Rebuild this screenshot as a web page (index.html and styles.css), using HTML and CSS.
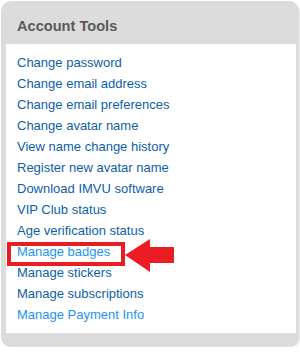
FILE: index.html
```html
<!DOCTYPE html>
<html>
<head>
<meta charset="utf-8">
<link rel="stylesheet" href="styles.css">
</head>
<body>
<div class="box">
  <div class="box-head">Account Tools</div>
  <ul class="panel">
    <li><a class="link">Change password</a></li>
    <li><a class="link">Change email address</a></li>
    <li><a class="link">Change email preferences</a></li>
    <li><a class="link">Change avatar name</a></li>
    <li><a class="link">View name change history</a></li>
    <li><a class="link">Register new avatar name</a></li>
    <li><a class="link">Download IMVU software</a></li>
    <li><a class="link">VIP Club status</a></li>
    <li><a class="link">Age verification status</a></li>
    <li class="marked"><a class="link link-hi">Manage badges</a>
      <span class="mark-box"></span>
      <svg class="mark-arrow" width="50" height="34" viewBox="0 0 50 34"><polygon points="0,16 25,0 25,8 49,8 49,24 25,24 25,33" fill="#ec1c24"/></svg>
    </li>
    <li><a class="link">Manage stickers</a></li>
    <li><a class="link">Manage subscriptions</a></li>
    <li><a class="link link-hi">Manage Payment Info</a></li>
  </ul>
</div>
</body>
</html>
```
FILE: styles.css
```css
html, body {
  margin: 0;
  padding: 0;
  background: #ffffff;
}
.box {
  margin: 1px 0 0 1px;
  width: 298px;
  height: 346px;
  box-sizing: border-box;
  background: #dcdcdc;
  border-radius: 10px;
  box-shadow: 1px 1px 1px #e8e8e8;
  padding: 0 3px 0 5px;
  font-family: "Liberation Sans", Arial, sans-serif;
}
.box-head {
  height: 43px;
  box-sizing: border-box;
  padding: 16px 0 0 11px;
  font-size: 14.6px;
  line-height: 18px;
  font-weight: bold;
  color: #5a5a5a;
}
.panel {
  list-style: none;
  margin: 0;
  background: #ffffff;
  height: 289px;
  box-sizing: border-box;
  padding: 8px 0 0 11px;
}
.panel li {
  font-size: 13px;
  line-height: 21px;
  height: 21px;
}
.link {
  color: #0e5fa6;
  text-decoration: none;
}
.link-hi {
  color: #2594f0;
}
.marked {
  position: relative;
}
.mark-box {
  position: absolute;
  left: -10px;
  top: 1px;
  width: 118px;
  height: 24px;
  box-sizing: border-box;
  border: 4px solid #ec1c24;
}
.mark-arrow {
  position: absolute;
  left: 108px;
  top: -2px;
  display: block;
}
```
